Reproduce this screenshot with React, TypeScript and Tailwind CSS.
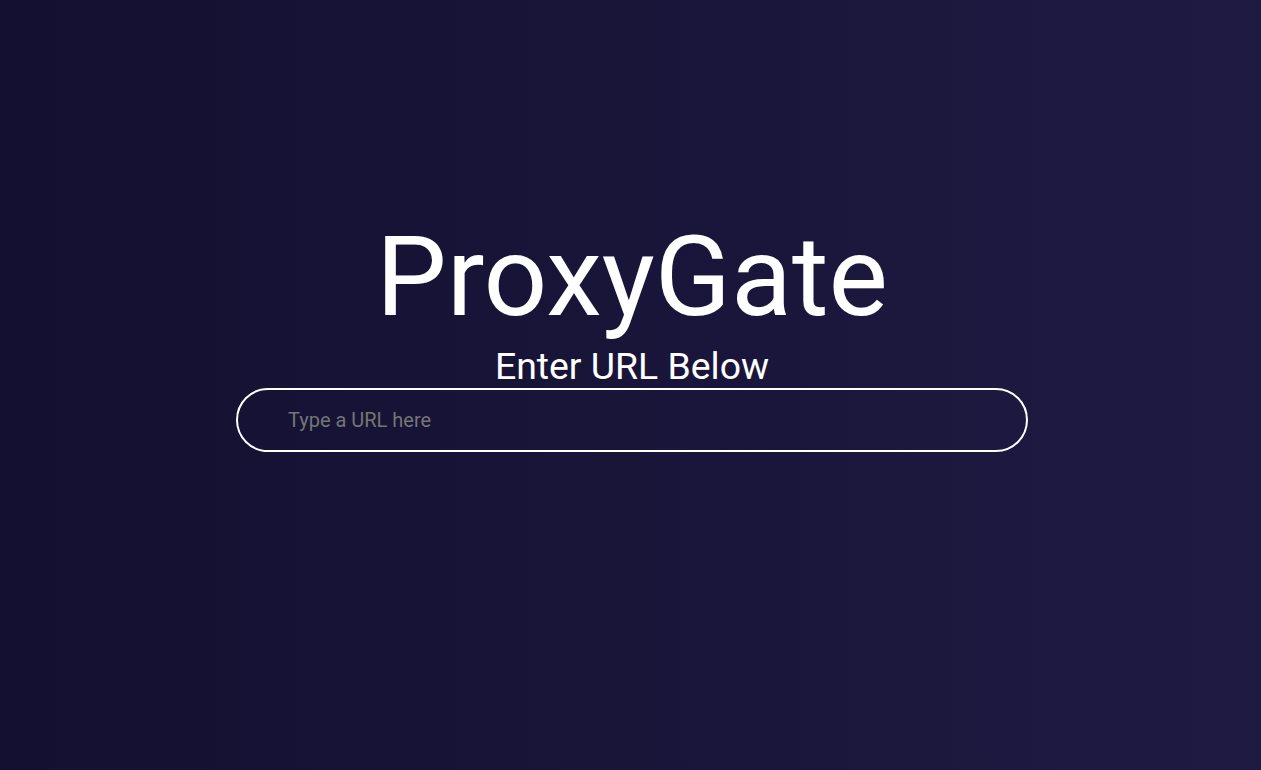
export default function App() {
  return (
    <div
      className="w-full h-[770px] flex flex-col items-center pt-[211px] pl-[3px] bg-gradient-to-r from-[#131031] to-[#1f1a42] text-white"
      style={{ fontFamily: "Roboto, 'Liberation Sans', sans-serif" }}
    >
      <h1 className="text-[112px] leading-[131px] font-normal">ProxyGate</h1>
      <h2 className="mt-[3px] text-[37.4px] leading-[43px] font-normal">Enter URL Below</h2>
      <input
        type="text"
        placeholder="Type a URL here"
        className="w-[792px] h-[64px] rounded-full border-2 border-white bg-transparent pl-[50px] pr-6 text-[20px] text-white placeholder:text-[#757575] outline-none"
        style={{ fontFamily: "Roboto, 'Liberation Sans', sans-serif" }}
      />
    </div>
  );
}
